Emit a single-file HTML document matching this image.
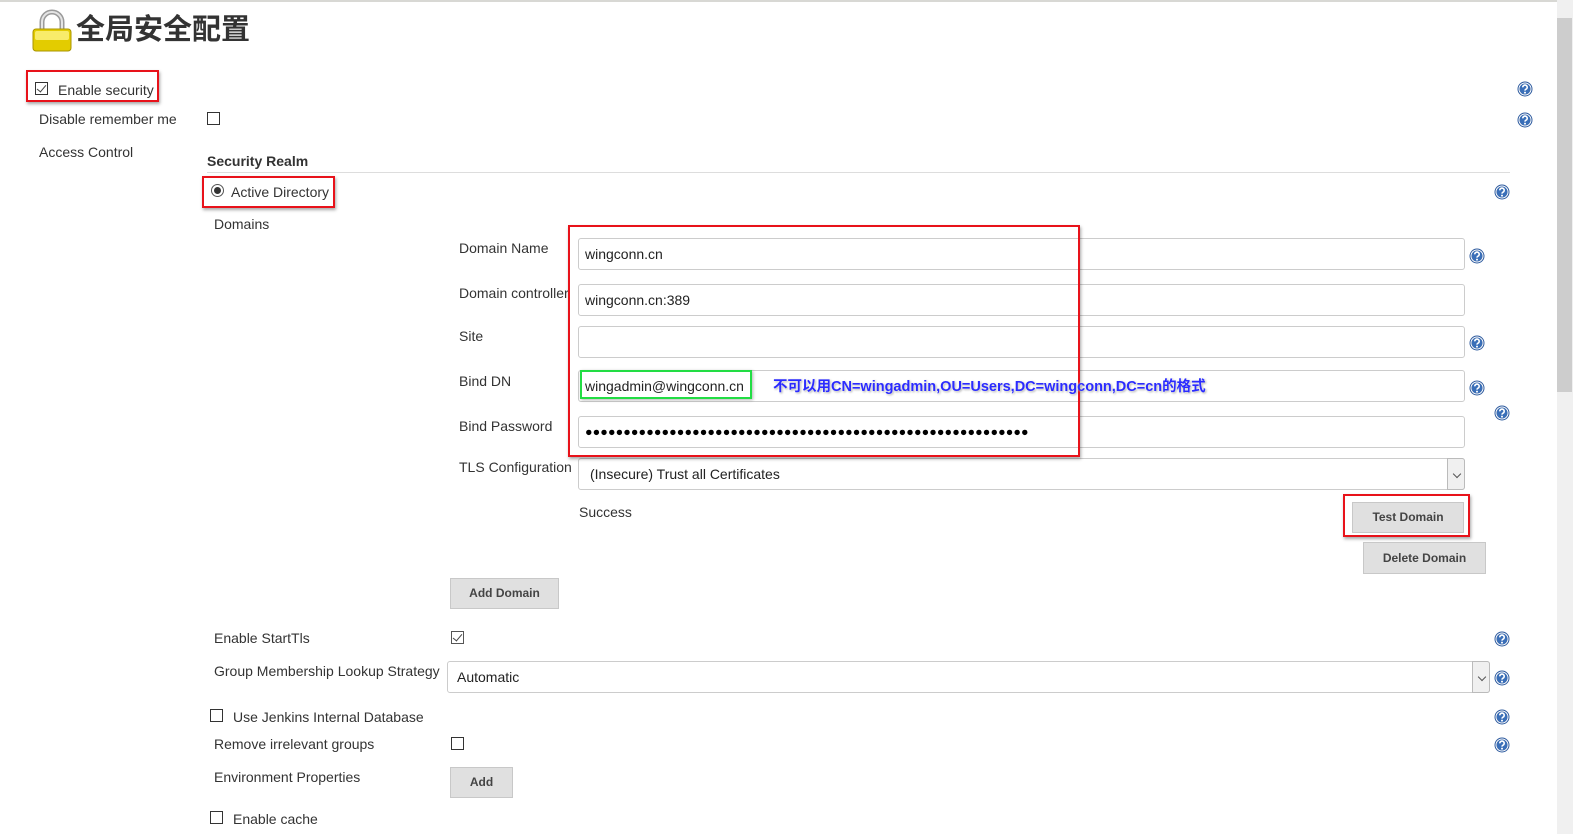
<!DOCTYPE html>
<html><head><meta charset="utf-8">
<style>
*{box-sizing:border-box;margin:0;padding:0}
body{width:1573px;height:834px;overflow:hidden;background:#fff;font-family:"Liberation Sans","Noto Sans CJK SC",sans-serif;font-size:14px;color:#333;position:relative}
.a{position:absolute;white-space:nowrap}
.t{position:absolute;white-space:nowrap;line-height:16px;transform:translateY(-8px)}
.cb{position:absolute;width:13px;height:13px;border:1px solid #333;background:#fff}
.cb.c::after{content:"";position:absolute;left:3px;top:0px;width:4px;height:8px;border:solid #444;border-width:0 1.5px 1.5px 0;transform:rotate(40deg)}
.red{position:absolute;border:2px solid #e8121a;box-shadow:1px 2px 3px rgba(0,0,0,.35)}
.inp{position:absolute;left:578px;width:887px;height:32px;border:1px solid #ccc;border-radius:3px;background:#fff;font-size:14px;line-height:30px;padding-left:6px;color:#222}
.btn{position:absolute;background:#e0e0e0;border:1px solid #c8c8c8;font-weight:bold;font-size:12px;color:#444;text-align:center}
.arr{position:absolute;top:-1px;right:-1px;width:18px;height:32px;border:1px solid #bbb;border-radius:0 3px 3px 0;background:#f0f0f0}
.arr::after{content:"";position:absolute;left:6px;top:12px;width:5px;height:5px;border:solid #555;border-width:0 1px 1px 0;transform:rotate(45deg)}
.h{position:absolute;width:16px;height:16px}
</style></head><body>
<div class="a" style="left:0;top:0;width:1557px;height:2px;background:#d8d8d4"></div>
<div class="a" style="left:1557px;top:0;width:16px;height:834px;background:#f0f0f0"></div>
<div class="a" style="left:1557px;top:18px;width:15px;height:374px;background:#cdcdcd"></div>

<svg class="a" style="left:31px;top:9px" width="42" height="44" viewBox="0 0 42 44">
<path d="M11 22 V13 A10 10 0 0 1 31 13 V22" fill="none" stroke="#9a9a9a" stroke-width="5"/>
<path d="M11 22 V13 A10 10 0 0 1 31 13 V22" fill="none" stroke="#e4e4e4" stroke-width="2"/>
<rect x="2" y="20" width="38" height="22" rx="3" fill="#e3cc00" stroke="#a89400"/>
<rect x="4" y="22" width="34" height="9" rx="2" fill="#f8ec6a"/>
</svg>
<div class="t" style="left:76px;top:30px;font-size:29px;font-weight:bold;line-height:32px;transform:translateY(-16px);color:#333">全局安全配置</div>

<div class="red" style="left:26px;top:70px;width:133px;height:32px"></div>
<div class="cb c" style="left:35px;top:82px"></div>
<div class="t" style="left:58px;top:90px">Enable security</div>
<div class="t" style="left:39px;top:119px">Disable remember me</div>
<div class="cb" style="left:207px;top:112px"></div>
<div class="t" style="left:39px;top:152px">Access Control</div>
<div class="t" style="left:207px;top:161px;font-weight:bold">Security Realm</div>
<div class="a" style="left:207px;top:172px;width:1303px;height:1px;background:#ddd"></div>

<div class="red" style="left:202px;top:176px;width:133px;height:32px"></div>
<div class="a" style="left:211px;top:184px;width:13px;height:13px;border:1px solid #555;border-radius:50%"><div class="a" style="left:2px;top:2px;width:7px;height:7px;border-radius:50%;background:#333"></div></div>
<div class="t" style="left:231px;top:192px">Active Directory</div>
<div class="t" style="left:214px;top:224px">Domains</div>

<div class="t" style="left:459px;top:248px">Domain Name</div>
<div class="t" style="left:459px;top:293px">Domain controller</div>
<div class="t" style="left:459px;top:336px">Site</div>
<div class="t" style="left:459px;top:381px">Bind DN</div>
<div class="t" style="left:459px;top:426px">Bind Password</div>
<div class="t" style="left:459px;top:467px">TLS Configuration</div>

<div class="inp" style="top:238px">wingconn.cn</div>
<div class="inp" style="top:284px">wingconn.cn:389</div>
<div class="inp" style="top:326px"></div>
<div class="inp" style="top:370px">wingadmin@wingconn.cn</div>
<div class="inp" style="top:416px;font-size:12.5px;letter-spacing:0.1px;font-weight:bold;color:#000">●●●●●●●●●●●●●●●●●●●●●●●●●●●●●●●●●●●●●●●●●●●●●●●●●●●●●●●●●●</div>
<div class="inp" style="top:458px;padding-left:11px">(Insecure) Trust all Certificates<div class="arr"></div></div>

<div class="red" style="left:568px;top:225px;width:512px;height:232px"></div>
<div class="a" style="left:580px;top:370px;width:172px;height:29px;border:2px solid #22dd44;box-shadow:1px 1px 3px rgba(0,0,0,.3)"></div>
<div class="t" style="left:773px;top:387px;font-weight:bold;font-size:14.5px;color:#2b2bff;letter-spacing:0px;text-shadow:0 0 2px #fff,1px 1px 2px rgba(0,0,0,.4)">不可以用CN=wingadmin,OU=Users,DC=wingconn,DC=cn的格式</div>

<div class="t" style="left:579px;top:512px">Success</div>
<div class="red" style="left:1343px;top:494px;width:127px;height:43px"></div>
<div class="btn" style="left:1352px;top:502px;width:112px;height:31px;line-height:29px">Test Domain</div>
<div class="btn" style="left:1363px;top:542px;width:123px;height:32px;line-height:30px">Delete Domain</div>
<div class="btn" style="left:450px;top:578px;width:109px;height:31px;line-height:29px">Add Domain</div>

<div class="t" style="left:214px;top:638px">Enable StartTls</div>
<div class="cb c" style="left:451px;top:631px;border-color:#555"></div>
<div class="t" style="left:214px;top:671px">Group Membership Lookup Strategy</div>
<div class="inp" style="left:447px;width:1043px;top:661px;padding-left:9px">Automatic<div class="arr"></div></div>
<div class="cb" style="left:210px;top:709px"></div>
<div class="t" style="left:233px;top:717px">Use Jenkins Internal Database</div>
<div class="t" style="left:214px;top:744px">Remove irrelevant groups</div>
<div class="cb" style="left:451px;top:737px"></div>
<div class="t" style="left:214px;top:777px">Environment Properties</div>
<div class="btn" style="left:450px;top:767px;width:63px;height:31px;line-height:29px">Add</div>
<div class="cb" style="left:210px;top:811px"></div>
<div class="t" style="left:233px;top:819px">Enable cache</div>

<svg width="0" height="0" style="position:absolute"><defs><g id="q"><circle cx="8" cy="8" r="7.5" fill="#2d5a9e"/><circle cx="8" cy="8" r="6" fill="none" stroke="#fff" stroke-width="1"/><circle cx="8" cy="8" r="5.3" fill="#3a6fb8"/><path d="M5.8 6.3a2.2 2.2 0 1 1 3 2c-.6.3-.8.6-.8 1.3" fill="none" stroke="#fff" stroke-width="1.6"/><circle cx="8" cy="11.6" r="1" fill="#fff"/></g></defs></svg>
<svg class="h" style="left:1517px;top:81px"><use href="#q"/></svg>
<svg class="h" style="left:1517px;top:112px"><use href="#q"/></svg>
<svg class="h" style="left:1494px;top:184px"><use href="#q"/></svg>
<svg class="h" style="left:1469px;top:248px"><use href="#q"/></svg>
<svg class="h" style="left:1469px;top:335px"><use href="#q"/></svg>
<svg class="h" style="left:1469px;top:380px"><use href="#q"/></svg>
<svg class="h" style="left:1494px;top:405px"><use href="#q"/></svg>
<svg class="h" style="left:1494px;top:631px"><use href="#q"/></svg>
<svg class="h" style="left:1494px;top:670px"><use href="#q"/></svg>
<svg class="h" style="left:1494px;top:709px"><use href="#q"/></svg>
<svg class="h" style="left:1494px;top:737px"><use href="#q"/></svg>
</body></html>
